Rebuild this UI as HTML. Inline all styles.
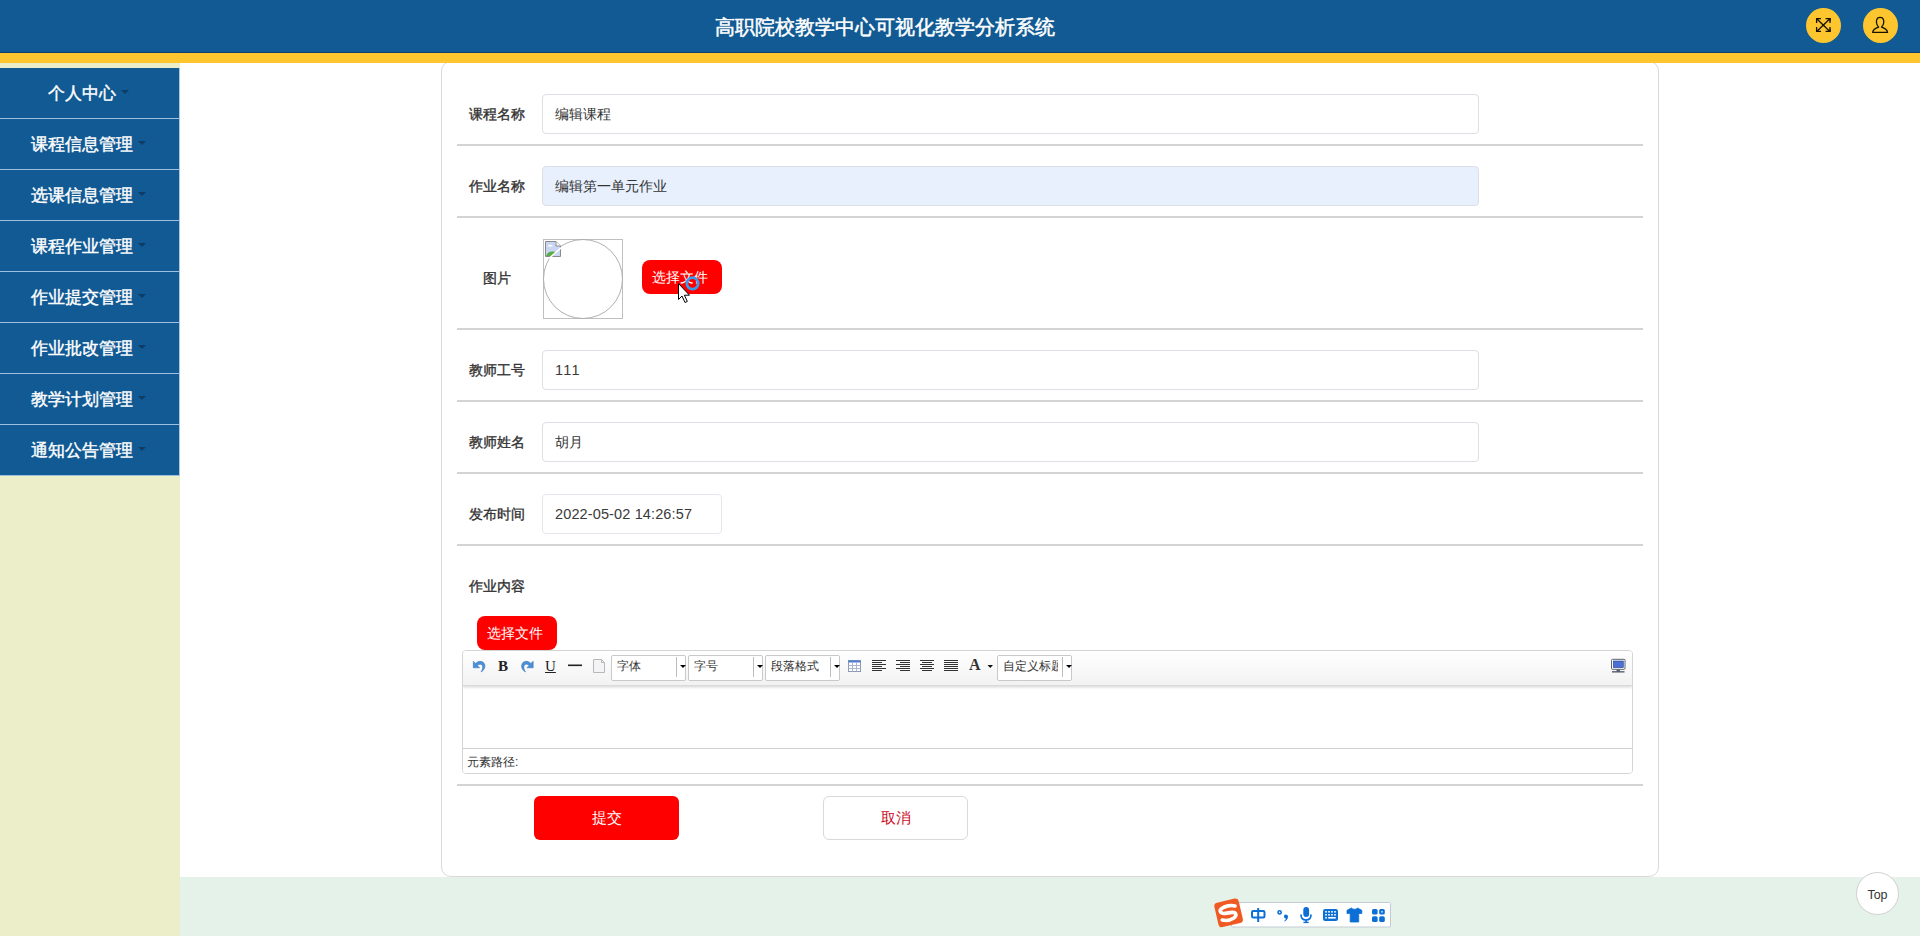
<!DOCTYPE html>
<html><head><meta charset="utf-8">
<style>
*{box-sizing:border-box;margin:0;padding:0}
html,body{width:1920px;height:936px;overflow:hidden;background:#fff;font-family:"Liberation Sans",sans-serif;}
.abs{position:absolute}
#hdr{z-index:5;left:0;top:0;width:1920px;height:53px;background:#125a93;border-bottom:1px solid #10406a}
#title{z-index:6;left:715px;top:13px;font-size:20px;-webkit-text-stroke:0.5px #fff;letter-spacing:0;color:#fff;white-space:nowrap;line-height:28px}
#ystripe{z-index:5;left:0;top:53px;width:1920px;height:10px;background:#fdc62f}
.hicon{z-index:6;top:8px;width:35px;height:35px;border-radius:50%;background:#fdc62f}
#side{left:0;top:63px;width:180px;height:873px;background:#ebeec8}
.mi{left:0;width:180px;height:51px;background:#125a93;border-bottom:1px solid #9dbfe0;border-right:1px solid #a9c8e4;color:#fff;font-size:17px;font-weight:normal;-webkit-text-stroke:0.4px #fff;text-align:center;line-height:52px;white-space:nowrap;padding-right:2px}
.mi i{display:inline-block;width:0;height:0;border-left:4px solid transparent;border-right:4px solid transparent;border-top:4px solid #0d3d66;vertical-align:middle;margin-left:5px;margin-top:-6px}
#foot{left:180px;top:877px;width:1740px;height:59px;background:#e4f2ea}
#card{left:441px;top:61px;width:1218px;height:816px;border:1px solid #d9d9d9;border-radius:10px;background:#fff}
.lbl{left:469px;font-size:14px;font-weight:normal;-webkit-text-stroke:0.35px #333;color:#333;white-space:nowrap;line-height:20px}
.inp{left:542px;width:937px;height:40px;border:1px solid #dcdfe6;border-radius:4px;background:#fff;font-size:14px;color:#333;padding-left:12px;line-height:38px;white-space:nowrap}
.div{left:457px;width:1186px;height:2px;background:#d4d4d4}
.rbtn{width:80px;height:34px;background:#ff0000;border-radius:8px;color:#fff;font-size:14px;text-align:left;padding-left:10px;line-height:34px;white-space:nowrap}
.sel{width:75px;height:26px;border:1px solid #c9c9c9;border-radius:2px;background:#fff;font-size:12px;color:#333;line-height:20px;padding-left:5px;white-space:nowrap;overflow:visible}
.sel b{position:absolute;left:64px;top:1px;width:1px;height:20px;background:#bdbdbd}
.sel i{position:absolute;left:68px;top:9px;width:0;height:0;border-left:3px solid transparent;border-right:3px solid transparent;border-top:3px solid #000}
</style></head><body>
<div id="hdr" class="abs"></div>
<div id="title" class="abs">高职院校教学中心可视化教学分析系统</div>
<div id="ystripe" class="abs"></div>
<div class="abs hicon" style="left:1806px"></div>
<div class="abs hicon" style="left:1863px"></div>

<div id="side" class="abs"></div>
<div class="abs mi" style="top:68px">个人中心<i></i></div>
<div class="abs mi" style="top:119px">课程信息管理<i></i></div>
<div class="abs mi" style="top:170px">选课信息管理<i></i></div>
<div class="abs mi" style="top:221px">课程作业管理<i></i></div>
<div class="abs mi" style="top:272px">作业提交管理<i></i></div>
<div class="abs mi" style="top:323px">作业批改管理<i></i></div>
<div class="abs mi" style="top:374px">教学计划管理<i></i></div>
<div class="abs mi" style="top:425px">通知公告管理<i></i></div>

<div id="foot" class="abs"></div>
<div id="card" class="abs"></div>

<div class="abs lbl" style="top:104px">课程名称</div>
<div class="abs inp" style="top:94px">编辑课程</div>
<div class="abs div" style="top:144px"></div>

<div class="abs lbl" style="top:176px">作业名称</div>
<div class="abs inp" style="top:166px;background:#e8f0fe">编辑第一单元作业</div>
<div class="abs div" style="top:216px"></div>

<div class="abs lbl" style="top:268px;left:483px">图片</div>
<div class="abs" style="left:543px;top:239px;width:80px;height:80px;border:1px solid #c0c0c0"></div>
<div class="abs" style="left:543px;top:239px;width:80px;height:80px;border:1px solid #b0b0b0;border-radius:50%"></div>
<div class="abs rbtn" style="left:642px;top:260px">选择文件</div>
<div class="abs div" style="top:328px"></div>

<div class="abs lbl" style="top:360px">教师工号</div>
<div class="abs inp" style="top:350px;font-size:14.5px;letter-spacing:1.3px;color:#3a3a3a">111</div>
<div class="abs div" style="top:400px"></div>

<div class="abs lbl" style="top:432px">教师姓名</div>
<div class="abs inp" style="top:422px">胡月</div>
<div class="abs div" style="top:472px"></div>

<div class="abs lbl" style="top:504px">发布时间</div>
<div class="abs inp" style="top:494px;width:180px;border-color:#e4e7ed;font-size:14.5px;letter-spacing:0.13px;color:#3a3a3a">2022-05-02 14:26:57</div>
<div class="abs div" style="top:544px"></div>

<div class="abs lbl" style="top:576px">作业内容</div>
<div class="abs rbtn" style="left:477px;top:616px">选择文件</div>
<div id="editor" class="abs" style="left:462px;top:650px;width:1171px;height:124px;border:1px solid #d4d4d4;border-radius:4px;background:#fff;overflow:hidden">
<div class="abs" style="left:0;top:0;width:1169px;height:35px;background:linear-gradient(#fff,#f2f2f2);border-bottom:1px solid #dadada;box-shadow:0 1px 3px #d0d0d0"></div>
<div class="abs" style="left:0;top:97px;width:1169px;height:26px;border-top:1px solid #d0d0d0;background:#fff"></div>
<div class="abs" style="left:4px;top:104px;font-size:12px;color:#333;line-height:14px;white-space:nowrap">元素路径:</div>
</div>
<div class="abs sel" style="left:611px;top:655px">字体<b></b><i></i></div>
<div class="abs sel" style="left:688px;top:655px">字号<b></b><i></i></div>
<div class="abs sel" style="left:765px;top:655px">段落格式<b></b><i></i></div>
<div class="abs sel" style="left:997px;top:655px"><span style="display:inline-block;width:55px;overflow:hidden;vertical-align:top">自定义标题</span><b></b><i></i></div>
<div class="abs" style="left:498px;top:655px;font-family:'Liberation Serif',serif;font-weight:bold;font-size:15px;line-height:22px;color:#222">B</div>
<div class="abs" style="left:545px;top:655px;font-family:'Liberation Serif',serif;font-size:15px;line-height:22px;color:#222;text-decoration:underline">U</div>
<div class="abs" style="left:969px;top:654px;font-family:'Liberation Serif',serif;font-weight:bold;font-size:16px;line-height:22px;color:#333">A</div>
<div class="abs div" style="top:784px"></div>

<div class="abs" style="left:534px;top:796px;width:145px;height:44px;background:#ff0000;border-radius:6px;color:#fff;font-size:15px;text-align:center;line-height:44px">提交</div>
<div class="abs" style="left:823px;top:796px;width:145px;height:44px;background:#fff;border:1px solid #d9d9d9;border-radius:6px;color:#cc0a1e;font-size:15px;text-align:center;line-height:42px">取消</div>

<div class="abs" style="left:1856px;top:872px;width:43px;height:43px;border-radius:50%;background:#fff;border:1px solid #d0d0d0;font-size:12.5px;color:#333;text-align:center;line-height:45px">Top</div>

<svg class="abs" style="left:0;top:0;z-index:7" width="1920" height="936" viewBox="0 0 1920 936">
<!-- expand icon -->
<g stroke="#1a1200" fill="none" stroke-width="1.3">
<line x1="1817" y1="19" x2="1829.6" y2="31.2"/>
<line x1="1829.6" y1="19" x2="1817" y2="31.2"/>
<path d="M1821 18.6 H1816.6 V23"/>
<path d="M1825.6 18.6 H1830 V23"/>
<path d="M1821 31.4 H1816.6 V27"/>
<path d="M1825.6 31.4 H1830 V27"/>
</g>
<g fill="#1a1200">
<path d="M1816 18 L1819.6 18 L1816 21.6 Z"/>
<path d="M1830.6 18 L1827 18 L1830.6 21.6 Z"/>
<path d="M1816 32 L1819.6 32 L1816 28.4 Z"/>
<path d="M1830.6 32 L1827 32 L1830.6 28.4 Z"/>
<circle cx="1823.3" cy="25.1" r="1.1"/>
</g>
<!-- user icon -->
<path d="M1878.6 27 C1876.5 25 1876.2 22.5 1876.6 20.2 C1877 18 1878.5 17.3 1880.1 17.3 C1881.7 17.3 1883.2 18 1883.6 20.2 C1884 22.5 1883.7 25 1881.6 27 L1881.6 27.2 C1884.5 28.2 1887 29.5 1887.6 32.3 L1872.6 32.3 C1873.2 29.5 1875.7 28.2 1878.6 27.2 Z" fill="none" stroke="#1a1200" stroke-width="1.3" stroke-linejoin="round"/>

<!-- toolbar icons -->
<g fill="#4a8fd8" stroke="#2f6db3" stroke-width="0.5">
<path d="M473.3 661.2 L473.3 667.8 L479.6 667.8 L477.4 665.6 C479 663.8 481.2 663.8 482.2 665.2 C483.2 666.8 482.6 669.6 481 672 C484.2 670.4 485.6 667 484.6 664.2 C483.4 661 479 660.2 475.6 663.4 Z"/>
<path d="M533.2 661.2 L533.2 667.8 L526.9 667.8 L529.1 665.6 C527.5 663.8 525.3 663.8 524.3 665.2 C523.3 666.8 523.9 669.6 525.5 672 C522.3 670.4 520.9 667 521.9 664.2 C523.1 661 527.5 660.2 530.9 663.4 Z"/>
</g>
<rect x="568" y="664.5" width="14" height="1.6" fill="#222"/>
<path d="M593.5 659.5 H601.5 L604.5 662.5 V672.5 H593.5 Z" fill="#f4f4f6" stroke="#b8b8b8" stroke-width="1"/>
<path d="M601.5 659.5 V662.5 H604.5" fill="none" stroke="#b8b8b8" stroke-width="1"/>
<!-- table -->
<rect x="848.5" y="660.5" width="12" height="11" fill="#fff" stroke="#8a9ab8" stroke-width="1"/>
<rect x="848.5" y="660.5" width="12" height="2" fill="#4f7bd0"/>
<path d="M852.5 662.5 V671.5 M856.5 662.5 V671.5 M848.5 665.5 H860.5 M848.5 668.5 H860.5" stroke="#a9b6cc" stroke-width="1"/>
<!-- aligns -->
<g fill="#333">
<rect x="872" y="660" width="14" height="1"/><rect x="872" y="662" width="10" height="1"/><rect x="872" y="664" width="14" height="1"/><rect x="872" y="666" width="10" height="1"/><rect x="872" y="668" width="14" height="1"/><rect x="872" y="670" width="10" height="1"/>
<rect x="896" y="660" width="14" height="1"/><rect x="900" y="662" width="10" height="1"/><rect x="896" y="664" width="14" height="1"/><rect x="900" y="666" width="10" height="1"/><rect x="896" y="668" width="14" height="1"/><rect x="900" y="670" width="10" height="1"/>
<rect x="920" y="660" width="14" height="1"/><rect x="922" y="662" width="10" height="1"/><rect x="920" y="664" width="14" height="1"/><rect x="922" y="666" width="10" height="1"/><rect x="920" y="668" width="14" height="1"/><rect x="922" y="670" width="10" height="1"/>
<rect x="944" y="660" width="14" height="1"/><rect x="944" y="662" width="14" height="1"/><rect x="944" y="664" width="14" height="1"/><rect x="944" y="666" width="14" height="1"/><rect x="944" y="668" width="14" height="1"/><rect x="944" y="670" width="14" height="1"/>
</g>
<path d="M987.5 665 H993 L990.25 668 Z" fill="#111"/>
<!-- fullscreen monitor -->
<rect x="1611.5" y="659.3" width="13.5" height="10" rx="1" fill="#fff" stroke="#5a6270" stroke-width="1"/>
<rect x="1613.3" y="661" width="10" height="6.6" fill="#4a6fd6" stroke="#2a3f86" stroke-width="0.6"/>
<rect x="1616.5" y="669.5" width="3.5" height="2" fill="#5a6270"/>
<rect x="1612" y="671.2" width="12.5" height="1.3" fill="#4a5260"/>
<!-- broken image icon -->
<path d="M545.5 241.5 H556 L560.5 246 V256.5 H545.5 Z" fill="#c9d6f2" stroke="#8a8a8a" stroke-width="1"/>
<path d="M556 241.5 V246 H560.5" fill="#fff" stroke="#8a8a8a" stroke-width="1"/>
<path d="M546 256 C547.5 251.5 552 250.5 556.5 252.5 L553 256 Z" fill="#5aac44"/>
<path d="M547.5 246.5 C548.8 244 551.5 244 553 246.5 Z" fill="#fff"/>
<path d="M562 247 L549 258.5" stroke="#fff" stroke-width="1.6"/>
<!-- cursor -->
<path d="M678.5 283.5 V299.5 L682 296 L685 302.5 L687.3 301.4 L684.4 295.2 L689.5 295.2 Z" fill="#fff" stroke="#000" stroke-width="1" stroke-linejoin="miter"/>
<circle cx="692.5" cy="283.4" r="5.7" fill="none" stroke="#3a9be8" stroke-width="2.8"/>

<!-- IME bar -->
<rect x="1231.5" y="902.5" width="159" height="24.5" fill="#fff" stroke="#c3ccd6" stroke-width="1" rx="1"/>
<g transform="translate(1228.6 912.8) rotate(-13)">
<rect x="-12.5" y="-12.5" width="25" height="25" rx="3.5" fill="#f05a22"/>
<path d="M7.8 -5.2 C4 -7.2 -2 -7.6 -6 -5.6 C-9.5 -3.6 -7.5 -0.6 -3.5 -0.2 L3.5 0.4 C7.5 1 8 4.5 4 6.2 C0 7.6 -5 7 -7.8 5.6" fill="none" stroke="#fff" stroke-width="3.6" stroke-linecap="round"/>
</g>
<g fill="none" stroke="#0b6fd6" stroke-width="2">
<rect x="1252" y="911" width="12.5" height="6.5" rx="1.2"/>
<line x1="1258.2" y1="908" x2="1258.2" y2="922"/>
<circle cx="1279.6" cy="912.4" r="1.6" stroke-width="1.6"/>
<path d="M1301 914.5 C1301 918.5 1303 920 1306 920 C1309 920 1311 918.5 1311 914.5" stroke-width="1.7"/>
</g>
<rect x="1323" y="909" width="15" height="12" rx="2.2" fill="#0b6fd6"/>
<g fill="#0b6fd6">
<path d="M1285.5 914.5 C1287.5 914.5 1288.5 916 1287.8 918 C1287.3 919.5 1286.2 920.7 1284.6 921.4 L1284.2 920.9 C1285.2 920.2 1285.8 919.3 1285.9 918.5 C1284.8 918.5 1284 917.6 1284 916.5 C1284 915.3 1284.6 914.5 1285.5 914.5 Z"/>
<rect x="1303.3" y="907" width="5.8" height="10" rx="2.9"/>
<rect x="1305.3" y="919.5" width="1.6" height="2.5"/>
<rect x="1303.5" y="921.7" width="5.2" height="1.4"/>
<path d="M1351.5 908 C1352.5 909.7 1356.5 909.7 1357.5 908 L1361.8 910.3 L1361.8 913.5 L1358.7 913.5 L1358.7 922 L1350.2 922 L1350.2 913.5 L1347 913.5 L1347 910.3 Z" stroke="#0b6fd6" stroke-width="0.8" stroke-linejoin="round"/>
<rect x="1372" y="909" width="5.6" height="5.6" rx="1.6"/>
<rect x="1379.2" y="909" width="5.6" height="5.6" rx="1.6"/>
<rect x="1372" y="916.2" width="5.6" height="5.8" rx="1.6"/>
<rect x="1379.2" y="916.2" width="5.6" height="5.8" rx="1.6"/>
</g>
<rect x="1381.3" y="911.1" width="1.4" height="1.4" fill="#fff"/>
<g fill="#fff">
<rect x="1325.2" y="911" width="1.6" height="1.6"/><rect x="1328.2" y="911" width="1.6" height="1.6"/><rect x="1331.2" y="911" width="1.6" height="1.6"/><rect x="1334.2" y="911" width="1.6" height="1.6"/>
<rect x="1325.2" y="914" width="1.6" height="1.6"/><rect x="1328.2" y="914" width="1.6" height="1.6"/><rect x="1331.2" y="914" width="1.6" height="1.6"/><rect x="1334.2" y="914" width="1.6" height="1.6"/>
<rect x="1325.2" y="917" width="1.6" height="1.6"/><rect x="1328.2" y="917" width="7.6" height="1.6"/>
</g>
</svg>
</body></html>
